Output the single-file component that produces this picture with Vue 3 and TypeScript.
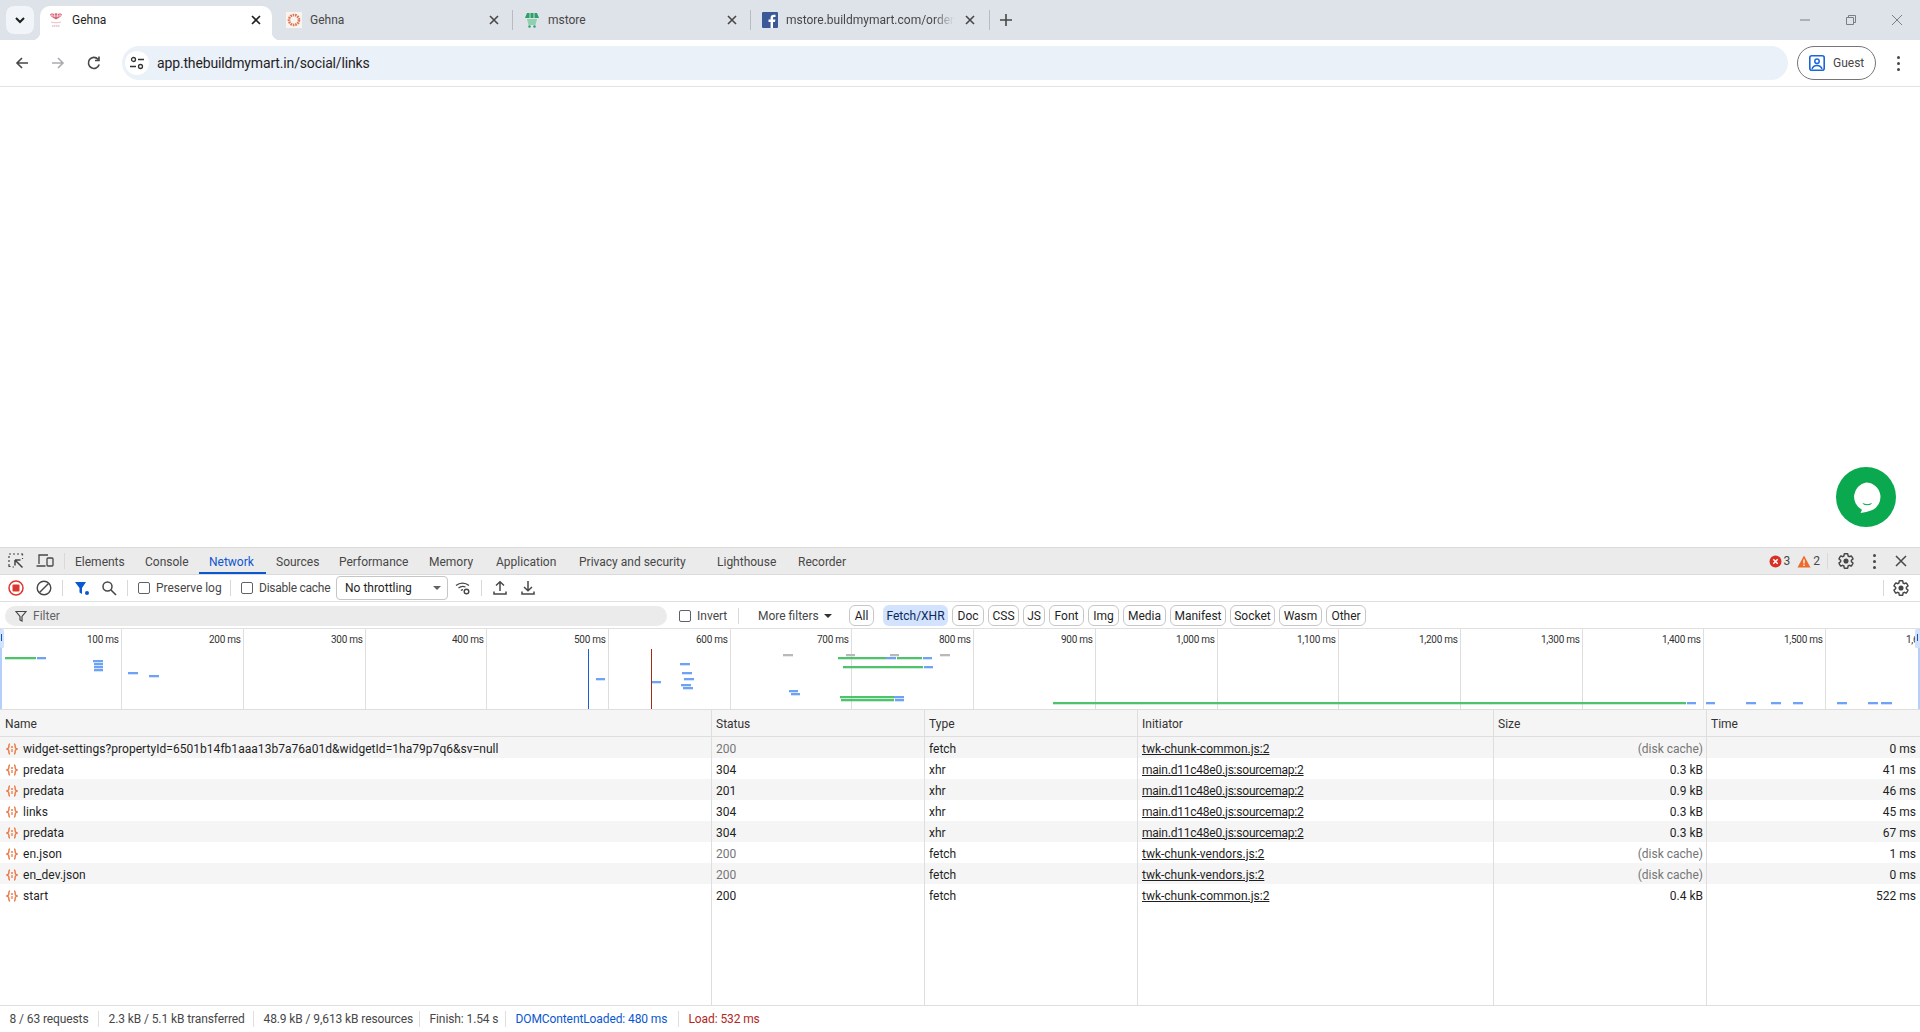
<script setup lang="ts">
// Chrome window with the DevTools network panel docked at the bottom.
const devTabs = [
  { label: 'Elements', w: 70 },
  { label: 'Console', w: 64 },
  { label: 'Network', w: 67 },
  { label: 'Sources', w: 63 },
  { label: 'Performance', w: 90 },
  { label: 'Memory', w: 67 },
  { label: 'Application', w: 83 },
  { label: 'Privacy and security', w: 138 },
  { label: 'Lighthouse', w: 81 },
  { label: 'Recorder', w: 70 },
]
const chips = [
  { label: 'All', w: 25 },
  { label: 'Fetch/XHR', w: 65 },
  { label: 'Doc', w: 32 },
  { label: 'CSS', w: 31 },
  { label: 'JS', w: 22 },
  { label: 'Font', w: 35 },
  { label: 'Img', w: 31 },
  { label: 'Media', w: 43 },
  { label: 'Manifest', w: 56 },
  { label: 'Socket', w: 45 },
  { label: 'Wasm', w: 43 },
  { label: 'Other', w: 40 },
]

const GREEN = '#4fc26c'
const BLUE = '#6ea2f5'
const GRAY = '#b9b9b9'
const ticks = Array.from({ length: 16 }, (_, i) => {
  const ms = (i + 1) * 100
  return { x: Math.floor(121.7 * (i + 1)) + 0.5, label: `${ms.toLocaleString('en-US')} ms` }
})

const bars: [number, number, number, string][] = [
  [5, 36, 658, GREEN], [37, 46, 658, BLUE],
  [93, 103, 661, BLUE], [94, 103, 664, BLUE], [94, 103, 667, BLUE], [94, 103, 670, BLUE],
  [128, 138, 673, BLUE], [149, 159, 676, BLUE], [596, 605, 679, BLUE], [652, 661, 682, BLUE],
  [680, 690, 664, BLUE], [682, 692, 673, BLUE], [684, 694, 679, BLUE], [681, 691, 685, BLUE], [683, 693, 688, BLUE],
  [783, 793, 655, GRAY], [846, 855, 655, GRAY], [890, 899, 655, GRAY], [940, 950, 655, GRAY],
  [838, 886, 658, GREEN], [886, 896, 658, BLUE], [897, 922, 658, GREEN], [923, 932, 658, BLUE],
  [843, 923, 667, GREEN], [924, 933, 667, BLUE],
  [789, 798, 691, BLUE], [791, 800, 694, BLUE],
  [840, 894, 697, GREEN], [894, 904, 697, BLUE], [841, 894, 700, GREEN], [895, 904, 700, BLUE],
  [1053, 1686, 703, GREEN], [1687, 1696, 703, BLUE], [1706, 1715, 703, BLUE], [1746, 1756, 703, BLUE],
  [1771, 1781, 703, BLUE], [1793, 1803, 703, BLUE], [1837, 1847, 703, BLUE], [1868, 1878, 703, BLUE], [1881, 1892, 703, BLUE],
]

const columns = ['Name', 'Status', 'Type', 'Initiator', 'Size', 'Time']
const common = 'twk-chunk-common.js:2'
const vendors = 'twk-chunk-vendors.js:2'
const mainMap = 'main.d11c48e0.js:sourcemap:2'
const rows = [
  { name: 'widget-settings?propertyId=6501b14fb1aaa13b7a76a01d&widgetId=1ha79p7q6&sv=null', status: '200', cached: true, type: 'fetch', init: common, size: '(disk cache)', time: '0 ms' },
  { name: 'predata', status: '304', cached: false, type: 'xhr', init: mainMap, size: '0.3 kB', time: '41 ms' },
  { name: 'predata', status: '201', cached: false, type: 'xhr', init: mainMap, size: '0.9 kB', time: '46 ms' },
  { name: 'links', status: '304', cached: false, type: 'xhr', init: mainMap, size: '0.3 kB', time: '45 ms' },
  { name: 'predata', status: '304', cached: false, type: 'xhr', init: mainMap, size: '0.3 kB', time: '67 ms' },
  { name: 'en.json', status: '200', cached: true, type: 'fetch', init: vendors, size: '(disk cache)', time: '1 ms' },
  { name: 'en_dev.json', status: '200', cached: true, type: 'fetch', init: vendors, size: '(disk cache)', time: '0 ms' },
  { name: 'start', status: '200', cached: false, type: 'fetch', init: common, size: '0.4 kB', time: '522 ms' },
]
const summary = [
  { text: '8 / 63 requests', cls: '', w: 99 },
  { text: '2.3 kB / 5.1 kB transferred', cls: '', w: 155 },
  { text: '48.9 kB / 9,613 kB resources', cls: '', w: 166 },
  { text: 'Finish: 1.54 s', cls: '', w: 86 },
  { text: 'DOMContentLoaded: 480 ms', cls: 'dcl', w: 173 },
  { text: 'Load: 532 ms', cls: 'load', w: 90 },
]
const gear = 'M19.14 12.94c.04-.3.06-.61.06-.94 0-.32-.02-.64-.07-.94l2.03-1.58c.18-.14.23-.41.12-.61l-1.92-3.32c-.12-.22-.37-.29-.59-.22l-2.39.96c-.5-.38-1.03-.7-1.62-.94l-.36-2.54c-.04-.24-.24-.41-.48-.41h-3.84c-.24 0-.43.17-.47.41l-.36 2.54c-.59.24-1.13.57-1.62.94l-2.39-.96c-.22-.08-.47 0-.59.22L2.74 8.87c-.12.21-.08.47.12.61l2.03 1.58c-.05.3-.09.63-.09.94s.02.64.07.94l-2.03 1.58c-.18.14-.23.41-.12.61l1.92 3.32c.12.22.37.29.59.22l2.39-.96c.5.38 1.03.7 1.62.94l.36 2.54c.05.24.24.41.48.41h3.84c.24 0 .44-.17.47-.41l.36-2.54c.59-.24 1.13-.56 1.62-.94l2.39.96c.22.08.47 0 .59-.22l1.92-3.32c.12-.22.07-.47-.12-.61l-2.01-1.58z'
</script>

<template>
  <div class="win">
    <div class="strip">
      <div class="tab-search">
        <svg width="12" height="12" viewBox="0 0 12 12"><path d="M2 4l4 4 4-4" fill="none" stroke="#1f1f1f" stroke-width="2" /></svg>
      </div>
      <div class="tab active">
        <svg class="fav" viewBox="0 0 16 16">
          <path d="M2 2.500l2-1.500 2 1 2-1 2 1 2-1 2 1.500-1 2-5 3-5-3z" fill="#d9697a" />
          <path d="M4 1v3M6.500 1v4M9.500 1v4M12 1v3M2.500 4h11" stroke="#fff" stroke-width=".6" />
          <path d="M3 10c3 1 7 1 10 0" fill="none" stroke="#e6b4bb" stroke-width=".9" />
          <path d="M4 14h8" stroke="#e3bcc1" stroke-width="1.500" stroke-dasharray="1.500 .5" />
        </svg>
        <span class="title">Gehna</span>
        <svg class="close" viewBox="0 0 16 16"><path d="M4 4l8 8M12 4l-8 8" stroke="#1f1f1f" stroke-width="1.600" /></svg>
      </div>
      <div class="tab sep">
        <svg class="fav" viewBox="0 0 16 16">
          <rect width="16" height="16" fill="#fbf3ee" />
          <circle cx="8" cy="8" r="5" fill="none" stroke="#d9785a" stroke-width="2.600" stroke-dasharray="1.600 .8" />
        </svg>
        <span class="title">Gehna</span>
        <svg class="close" viewBox="0 0 16 16"><path d="M4 4l8 8M12 4l-8 8" stroke="#474747" stroke-width="1.600" /></svg>
      </div>
      <div class="tab sep">
        <svg class="fav" viewBox="0 0 16 16">
          <path d="M3 1h10l2 5H1z" fill="#2f9e6b" />
          <path d="M6 1v5M10 1v5" stroke="#bfe6d2" />
          <path d="M3 7h10l-1.500 6h-7z" fill="#8fd0b0" />
          <circle cx="5.500" cy="14.500" r="1.200" fill="#2f9e6b" /><circle cx="10.500" cy="14.500" r="1.200" fill="#2f9e6b" />
        </svg>
        <span class="title">mstore</span>
        <svg class="close" viewBox="0 0 16 16"><path d="M4 4l8 8M12 4l-8 8" stroke="#474747" stroke-width="1.600" /></svg>
      </div>
      <div class="tab sep">
        <svg class="fav" viewBox="0 0 16 16">
          <rect width="16" height="16" rx="1" fill="#3b5998" />
          <path d="M11 16v-6h2l.4-2.400H11V6.200c0-.8.3-1.200 1.200-1.200h1.300V2.800c-.4 0-1-.1-1.800-.1-1.900 0-3.100 1.100-3.100 3.200v1.700H6.500V10h2.100v6z" fill="#fff" />
        </svg>
        <span class="title fade">mstore.buildmymart.com/orders</span>
        <svg class="close" viewBox="0 0 16 16"><path d="M4 4l8 8M12 4l-8 8" stroke="#474747" stroke-width="1.600" /></svg>
      </div>
      <svg class="plus" width="16" height="16" viewBox="0 0 16 16"><path d="M8 2v12M2 8h12" stroke="#474747" stroke-width="1.600" /></svg>
      <div class="winctl">
        <span><svg width="12" height="12" viewBox="0 0 12 12"><path d="M1 6h10" stroke="#7b7f85" /></svg></span>
        <span><svg width="12" height="12" viewBox="0 0 12 12"><path d="M1.500 3.500h7v7h-7zM3.500 3.500v-2h7v7h-2" fill="none" stroke="#7b7f85" /></svg></span>
        <span><svg width="12" height="12" viewBox="0 0 12 12"><path d="M1 1l10 10M11 1L1 11" stroke="#7b7f85" /></svg></span>
      </div>
    </div>

    <div class="toolbar">
      <div class="nav">
        <svg width="16" height="16" viewBox="0 0 16 16"><path d="M14 8H3M8 3L3 8l5 5" fill="none" stroke="#474747" stroke-width="1.600" /></svg>
      </div>
      <div class="nav">
        <svg width="16" height="16" viewBox="0 0 16 16"><path d="M2 8h11M8 3l5 5-5 5" fill="none" stroke="#a9acb0" stroke-width="1.600" /></svg>
      </div>
      <div class="nav">
        <svg width="16" height="16" viewBox="0 0 16 16"><path d="M13.200 9.500A5.500 5.500 0 1 1 12 4.200M13 1.500v4h-4" fill="none" stroke="#474747" stroke-width="1.600" /></svg>
      </div>
      <div class="omni">
        <div class="siteinfo">
          <svg width="16" height="16" viewBox="0 0 16 16">
            <circle cx="4.500" cy="4.500" r="2" fill="none" stroke="#333" stroke-width="1.300" />
            <path d="M9 4.500h6M1 11.500h6" stroke="#333" stroke-width="1.300" />
            <circle cx="11.500" cy="11.500" r="2" fill="none" stroke="#333" stroke-width="1.300" />
          </svg>
        </div>
        <span class="url">app.thebuildmymart.in/social/links</span>
      </div>
      <div class="guest">
        <svg width="16" height="16" viewBox="0 0 16 16">
          <rect x=".8" y=".8" width="14.400" height="14.400" rx="2" fill="none" stroke="#1a66d9" stroke-width="1.600" />
          <circle cx="8" cy="6.300" r="2.200" fill="none" stroke="#1a66d9" stroke-width="1.500" />
          <path d="M3 14c.8-2.600 2.600-3.600 5-3.600s4.200 1 5 3.600" fill="none" stroke="#1a66d9" stroke-width="1.500" />
        </svg>
        <span>Guest</span>
      </div>
      <div class="kebab"><i /><i /><i /></div>
    </div>

    <main class="page">
      <div class="chat">
        <svg width="60" height="60" viewBox="0 0 60 60">
          <circle cx="30" cy="30" r="30" fill="#0aa84f" />
          <path d="M30 15.500a14.500 14.500 0 0 1 5 28.100c-3 1.200-6.500 1.800-10.500 2.400l1.500-3.300a14.500 14.500 0 0 1 4-27.200z" fill="#fff" />
          <path d="M26.500 36c3 1.500 6.500 1.500 9.500 0-1 3-8.500 3-9.500 0z" fill="#0aa84f" />
        </svg>
      </div>
    </main>

    <section class="devtools">
      <div class="dt-tabs">
        <svg class="dt-ic first" width="16" height="16" viewBox="0 0 16 16">
          <path d="M1 1h2M5 1h2M9 1h2M13 1h1.500v1.500M1 3v2M1 7v2M1 11v2.500h1.500M14.500 5v1M4.500 14H6" fill="none" stroke="#474747" stroke-width="1.200" />
          <path d="M7 7h5.500M7 7v5.500M7 7l7.500 7.500" fill="none" stroke="#474747" stroke-width="1.500" />
        </svg>
        <svg class="dt-ic" width="18" height="16" viewBox="0 0 18 16">
          <path d="M3 11V2h9M.5 13h9" fill="none" stroke="#474747" stroke-width="1.300" />
          <rect x="11" y="5" width="6" height="8" rx="1" fill="none" stroke="#474747" stroke-width="1.300" />
        </svg>
        <i class="vsep tabs-sep" />
        <span
          v-for="t in devTabs"
          :key="t.label"
          class="dt-tab"
          :class="{ on: t.label === 'Network' }"
          :style="{ width: `${t.w}px` }"
        >{{ t.label }}</span>
        <div class="dt-right">
          <svg width="13" height="13" viewBox="0 0 13 13">
            <circle cx="6.500" cy="6.500" r="6" fill="#d93025" />
            <path d="M4.300 4.300l4.400 4.400M8.700 4.300l-4.400 4.400" stroke="#fff" stroke-width="1.500" />
          </svg>
          <span class="count">3</span>
          <svg class="warn" width="14" height="13" viewBox="0 0 14 13">
            <path d="M7 .5l6.500 12H.5z" fill="#ec6a2c" />
            <path d="M7 4.500v4M7 9.500v1.500" stroke="#fff" stroke-width="1.300" />
          </svg>
          <span class="count">2</span>
          <i class="vsep count-sep" />
          <svg class="gear-top" width="18" height="18" viewBox="0 0 24 24"><path :d="gear" fill="none" stroke="#474747" stroke-width="1.900" /><circle cx="12" cy="12" r="3.400" fill="#474747" /></svg>
          <div class="dt-kebab"><i /><i /><i /></div>
          <svg class="dt-x" width="14" height="14" viewBox="0 0 14 14"><path d="M2 2l10 10M12 2L2 12" stroke="#474747" stroke-width="1.500" /></svg>
        </div>
      </div>

      <div class="net-bar">
        <span class="ib">
          <svg width="16" height="16" viewBox="0 0 16 16"><circle cx="8" cy="8" r="7" fill="none" stroke="#dc362e" stroke-width="1.500" /><rect x="4.500" y="4.500" width="7" height="7" rx="1" fill="#dc362e" /></svg>
        </span>
        <span class="ib">
          <svg width="16" height="16" viewBox="0 0 16 16"><circle cx="8" cy="8" r="6.800" fill="none" stroke="#474747" stroke-width="1.400" /><path d="M3.500 12.500l9-9" stroke="#474747" stroke-width="1.400" /></svg>
        </span>
        <i class="vsep s1" />
        <span class="ib narrow">
          <svg width="16" height="16" viewBox="0 0 16 16"><path d="M1 2h11L8 8v6l-2.500-1.500V8z" fill="#0b57d0" /><circle cx="13" cy="13" r="2" fill="#0b57d0" /></svg>
        </span>
        <span class="ib narrow">
          <svg width="16" height="16" viewBox="0 0 16 16"><circle cx="6.500" cy="6.500" r="4.500" fill="none" stroke="#474747" stroke-width="1.500" /><path d="M10 10l5 5" stroke="#474747" stroke-width="1.600" /></svg>
        </span>
        <i class="vsep s2" />
        <span class="check c1" /><span class="cl preserve">Preserve log</span>
        <i class="vsep s3" />
        <span class="check c2" /><span class="cl disable">Disable cache</span>
        <div class="select"><span>No throttling</span><i class="tri" /></div>
        <span class="ib wifi">
          <svg width="16" height="16" viewBox="0 0 16 16">
            <path d="M1 5.500a10 10 0 0 1 13 0M3.500 8a6.500 6.500 0 0 1 7-1M6 10.500a3 3 0 0 1 2-.8" fill="none" stroke="#474747" stroke-width="1.300" />
            <circle cx="11.500" cy="11.500" r="2.300" fill="none" stroke="#474747" stroke-width="1.400" />
          </svg>
        </span>
        <i class="vsep s4" />
        <span class="ib up">
          <svg width="16" height="16" viewBox="0 0 16 16"><path d="M8 11V2M4 5.500L8 1.800l4 3.700M2 11.500v2.500h12v-2.500" fill="none" stroke="#474747" stroke-width="1.500" /></svg>
        </span>
        <span class="ib">
          <svg width="16" height="16" viewBox="0 0 16 16"><path d="M8 1v9.500M4 7l4 3.700L12 7M2 11.500v2.500h12v-2.500" fill="none" stroke="#474747" stroke-width="1.500" /></svg>
        </span>
        <div class="net-right">
          <i class="vsep" />
          <span class="ib">
            <svg width="18" height="18" viewBox="0 0 24 24"><path :d="gear" fill="none" stroke="#474747" stroke-width="1.900" /><circle cx="12" cy="12" r="3.400" fill="#474747" /></svg>
          </span>
        </div>
      </div>

      <div class="filter-bar">
        <div class="filter-input">
          <svg width="12" height="12" viewBox="0 0 12 12"><path d="M1 1.500h10L7 6.500V11l-2-1V6.500z" fill="none" stroke="#474747" stroke-width="1.200" /></svg>
          <span>Filter</span>
        </div>
        <span class="check c3" /><span class="cl invert">Invert</span>
        <i class="vsep s5" />
        <span class="cl more">More filters</span><i class="tri dark" />
        <div class="chips">
          <span
            v-for="c in chips"
            :key="c.label"
            class="chip"
            :class="{ sel: c.label === 'Fetch/XHR', gapped: c.label === 'All' }"
            :style="{ width: `${c.w}px` }"
          >{{ c.label }}</span>
        </div>
      </div>

      <div class="overview">
        <svg width="1920" height="80" viewBox="0 629 1920 80">
          <g v-for="t in ticks" :key="t.label">
            <line :x1="t.x" y1="629" :x2="t.x" y2="709" stroke="#dedede" />
            <text :x="t.x - 3" y="643" text-anchor="end" class="tick">{{ t.label }}</text>
          </g>
          <g v-for="(b, i) in bars" :key="i" :fill="b[3]">
            <rect :x="b[0]" :y="b[2] - 1" :width="b[1] - b[0]" height="2" />
            <rect :x="b[0]" :y="b[2] + 1" :width="b[1] - b[0]" height="1" opacity=".3" />
          </g>
          <rect x="588" y="649" width="1" height="60" fill="#1a5fd0" />
          <rect x="651" y="649" width="1" height="60" fill="#a52a1a" />
          <rect x="0" y="629" width="2" height="80" fill="#b5cffb" />
          <rect x="0" y="629" width="4" height="19" rx="1.500" fill="#d3e3fd" />
          <rect x="1" y="634" width="1" height="7" fill="#0b57d0" />
          <rect x="1918" y="629" width="2" height="80" fill="#b5cffb" />
          <rect x="1915" y="629" width="5" height="19" rx="1.500" fill="#d3e3fd" />
          <rect x="1917" y="634" width="1" height="7" fill="#0b57d0" />
        </svg>
      </div>

      <div class="table">
        <div class="row head">
          <span v-for="c in columns" :key="c">{{ c }}</span>
        </div>
        <div v-for="(r, i) in rows" :key="i" class="row" :class="{ odd: i % 2 === 0 }">
          <span class="name">
            <svg width="12" height="12" viewBox="0 0 12 12">
              <path d="M4 1C2.500 1 3 3 2.800 4.200 2.600 5.300 1.800 5.700 1 6c.8.300 1.600.7 1.800 1.800C3 9 2.500 11 4 11M8 1c1.500 0 1 2 1.200 3.200.2 1.100 1 1.500 1.800 1.800-.8.300-1.600.7-1.800 1.800C9 9 9.500 11 8 11" fill="none" stroke="#ea7d4b" stroke-width="1.500" />
              <circle cx="6" cy="4" r="1" fill="#ea7d4b" />
              <path d="M6 6v3" stroke="#ea7d4b" stroke-width="1.300" />
            </svg>
            {{ r.name }}
          </span>
          <span :class="{ dim: r.cached }">{{ r.status }}</span>
          <span>{{ r.type }}</span>
          <span class="link" :class="{ tight: r.init === mainMap }">{{ r.init }}</span>
          <span class="num" :class="{ dim: r.cached }">{{ r.size }}</span>
          <span class="num">{{ r.time }}</span>
        </div>
        <div class="col-lines"><i v-for="c in columns" :key="c" /></div>
      </div>

      <div class="status">
        <span v-for="s in summary" :key="s.text" :class="s.cls" :style="{ width: `${s.w}px` }">{{ s.text }}</span>
      </div>
    </section>
  </div>
</template>

<style scoped>
.win {
  width: 1920px;
  height: 1032px;
  display: flex;
  flex-direction: column;
  overflow: hidden;
  background: #fff;
  font-family: Roboto, "Liberation Sans", sans-serif;
  color: #1f1f1f;
}
svg {
  display: block;
  flex: none;
}

/* tab strip */
.strip {
  height: 40px;
  flex: none;
  display: flex;
  align-items: flex-end;
  padding-left: 6px;
  background: #dee3e9;
}
.tab-search {
  width: 28px;
  height: 28px;
  margin: 0 6px 6px 0;
  border-radius: 8px;
  background: #f1f4f8;
  display: flex;
  align-items: center;
  justify-content: center;
}
.tab {
  position: relative;
  width: 232px;
  height: 34px;
  margin-right: 6px;
  padding: 0 8px 6px;
  box-sizing: border-box;
  display: flex;
  align-items: center;
  gap: 8px;
  border-radius: 10px 10px 0 0;
  font-size: 12px;
  color: #474747;
}
.tab.active {
  background: #fff;
  color: #1f1f1f;
}
.tab.active::before,
.tab.active::after {
  content: "";
  position: absolute;
  bottom: 0;
  width: 8px;
  height: 8px;
}
.tab.active::before {
  left: -8px;
  background: radial-gradient(circle at 0 0, transparent 8px, #fff 8.500px);
}
.tab.active::after {
  right: -8px;
  background: radial-gradient(circle at 100% 0, transparent 8px, #fff 8.500px);
}
.tab.sep:nth-child(n + 4)::before {
  content: "";
  position: absolute;
  left: -4px;
  top: 4px;
  height: 20px;
  width: 1px;
  background: #b8bcc2;
}
.tab.sep:nth-child(5)::after {
  content: "";
  position: absolute;
  right: -4px;
  top: 4px;
  height: 20px;
  width: 1px;
  background: #b8bcc2;
}
.fav {
  width: 16px;
  height: 16px;
}
.title {
  flex: 1;
  min-width: 0;
  white-space: nowrap;
  overflow: hidden;
}
.title.fade {
  mask-image: linear-gradient(to right, #000 88%, transparent 100%);
}
.close {
  width: 16px;
  height: 16px;
}
.plus {
  margin: 0 0 12px 6px;
}
.winctl {
  margin-left: auto;
  align-self: flex-start;
  display: flex;
}
.winctl span {
  width: 46px;
  height: 40px;
  display: flex;
  align-items: center;
  justify-content: center;
}

/* address bar */
.toolbar {
  height: 46px;
  flex: none;
  display: flex;
  align-items: center;
  padding: 0 4px;
  border-radius: 8px 8px 0 0;
  border-bottom: 1px solid #e3e3e3;
  background: #fff;
}
.nav {
  width: 36px;
  height: 34px;
  display: flex;
  align-items: center;
  justify-content: center;
}
.omni {
  flex: 1;
  height: 34px;
  margin-left: 10px;
  padding-left: 3px;
  display: flex;
  align-items: center;
  border-radius: 17px;
  background: #ebf1f9;
}
.siteinfo {
  width: 24px;
  height: 24px;
  border-radius: 50%;
  background: #fff;
  display: flex;
  align-items: center;
  justify-content: center;
}
.url {
  margin-left: 8px;
  font-size: 14px;
  letter-spacing: -0.15px;
  color: #1f1f1f;
}
.guest {
  width: 79px;
  height: 34px;
  margin-left: 9px;
  box-sizing: border-box;
  padding-left: 11px;
  display: flex;
  align-items: center;
  gap: 8px;
  border: 1px solid #747775;
  border-radius: 17px;
  font-size: 12px;
  color: #474747;
}
.kebab {
  width: 36px;
  margin-left: 4px;
  display: flex;
  flex-direction: column;
  align-items: center;
  gap: 3px;
}
.kebab i,
.dt-kebab i {
  width: 3px;
  height: 3px;
  border-radius: 50%;
  background: #474747;
}

.page {
  flex: 1;
  position: relative;
}
.chat {
  position: absolute;
  left: 1836px;
  top: 380px;
}

/* devtools */
.devtools {
  flex: none;
  height: 485px;
  display: flex;
  flex-direction: column;
  font-size: 12px;
  border-top: 1px solid #dadada;
  box-sizing: border-box;
}
.vsep {
  flex: none;
  display: block;
  width: 1px;
  height: 16px;
  background: #d9d9d9;
}
.dt-tabs {
  height: 27px;
  flex: none;
  box-sizing: border-box;
  display: flex;
  align-items: center;
  background: #ebebeb;
  border-bottom: 1px solid #dadada;
  color: #474747;
}
.dt-ic.first {
  margin-left: 8px;
}
.dt-ic + .dt-ic {
  margin-left: 12px;
}
.tabs-sep {
  margin-left: 10px;
  margin-right: -0.500px;
}
.dt-tab {
  flex: none;
  height: 26px;
  line-height: 29px;
  padding-left: 10.500px;
  box-sizing: border-box;
  white-space: nowrap;
}
.dt-tab.on {
  color: #0b57d0;
  border-bottom: 2px solid #0b57d0;
}
.dt-right {
  margin-left: auto;
  display: flex;
  align-items: center;
}
.count {
  margin-left: 2px;
}
.warn {
  margin-left: 7px;
}
.count-sep {
  margin: 0 9px 0 7px;
}
.gear-top {
  margin-right: 5px;
}
.dt-kebab {
  width: 28px;
  display: flex;
  flex-direction: column;
  align-items: center;
  gap: 3px;
}
.dt-x {
  margin: 0 12px 0 6px;
}
.net-bar,
.filter-bar {
  height: 27px;
  flex: none;
  box-sizing: border-box;
  display: flex;
  align-items: center;
  border-bottom: 1px solid #e0e0e0;
  color: #474747;
}
.net-bar {
  padding-left: 2px;
}
.ib {
  width: 28px;
  flex: none;
  display: flex;
  justify-content: center;
}
.ib.narrow {
  width: 27px;
}
.s1 {
  margin: 0 5px 0 4px;
}
.s2 {
  margin: 0 0 0 5px;
}
.check {
  flex: none;
  width: 12px;
  height: 12px;
  box-sizing: border-box;
  border: 1px solid #5f6368;
  border-radius: 2px;
  background: #fff;
}
.c1,
.c2 {
  margin-left: 10px;
}
.cl {
  margin-left: 6px;
  white-space: nowrap;
}
.preserve {
  width: 65px;
  letter-spacing: -0.05px;
}
.disable {
  width: 72px;
  letter-spacing: -0.25px;
}
.s3 {
  margin-left: 9px;
}
.select {
  width: 112px;
  height: 24px;
  margin-left: 5px;
  box-sizing: border-box;
  padding: 0 6px 0 8px;
  display: flex;
  align-items: center;
  justify-content: space-between;
  border: 1px solid #c4c7c5;
  border-radius: 4px;
  color: #1f1f1f;
}
.tri {
  display: block;
  width: 0;
  height: 0;
  border-left: 4px solid transparent;
  border-right: 4px solid transparent;
  border-top: 4px solid #5f6368;
}
.tri.dark {
  margin-left: 6px;
  border-top-color: #333;
}
.wifi {
  margin-left: 1px;
}
.s4 {
  margin-left: 4px;
}
.up {
  margin-left: 4px;
}
.net-right {
  margin-left: auto;
  padding-right: 5px;
  display: flex;
  align-items: center;
  gap: 3px;
}
.filter-bar {
  padding: 1px 0 0 5px;
}
.filter-input {
  width: 662px;
  height: 20px;
  box-sizing: border-box;
  padding-left: 10px;
  display: flex;
  align-items: center;
  gap: 6px;
  border-radius: 10px;
  background: #ebebeb;
  color: #5f6368;
}
.c3 {
  margin-left: 12px;
}
.invert {
  width: 30px;
}
.s5 {
  margin-left: 11px;
}
.more {
  margin-left: 19px;
  width: 60px;
}
.chips {
  margin-left: 17px;
  display: flex;
  align-items: center;
  gap: 4px;
}
.chip {
  flex: none;
  height: 21px;
  line-height: 21px;
  text-align: center;
  box-sizing: border-box;
  border: 1px solid #c7c7c7;
  border-radius: 6px;
  color: #1f1f1f;
  white-space: nowrap;
}
.chip.gapped {
  margin-right: 5px;
}
.chip.sel {
  border-color: transparent;
  background: #d3e3fd;
  color: #0a2a5c;
}
.overview {
  height: 80px;
  flex: none;
  overflow: hidden;
}
.tick {
  font-size: 10px;
  letter-spacing: -0.3px;
  fill: #333;
}

/* request table */
.table {
  flex: 1;
  min-height: 0;
  position: relative;
  border-top: 1px solid #dedede;
}
.row {
  display: grid;
  grid-template-columns: 712px 213px 213px 356px 213px 1fr;
  height: 21px;
  align-items: center;
  white-space: nowrap;
}
.row > span {
  padding: 2px 4px 0;
}
.row.odd {
  background: #f5f5f5;
}
.row.head {
  height: 27px;
  box-sizing: border-box;
  background: #f5f5f5;
  border-bottom: 1px solid #dedede;
  color: #333;
}
.row.head > span {
  padding-top: 1px;
}
.row.head > span:first-child {
  padding-left: 5px;
}
.row .name {
  display: flex;
  align-items: center;
  gap: 5px;
  padding-left: 6px;
  letter-spacing: 0.04px;
}
.dim {
  color: #757575;
}
.link {
  text-decoration: underline;
  color: #1f1f1f;
}
.link.tight {
  letter-spacing: -0.22px;
}
.num {
  text-align: right;
}
.col-lines {
  position: absolute;
  inset: 0;
  display: grid;
  grid-template-columns: 712px 213px 213px 356px 213px 1fr;
  pointer-events: none;
}
.col-lines i {
  border-right: 1px solid #dedede;
}
.col-lines i:last-child {
  border: 0;
}
.status {
  height: 27px;
  flex: none;
  box-sizing: border-box;
  display: flex;
  align-items: center;
  border-top: 1px solid #dedede;
  color: #474747;
  white-space: nowrap;
}
.status span {
  flex: none;
  box-sizing: border-box;
  padding-left: 9.500px;
  letter-spacing: -0.1px;
  border-right: 1px solid #dedede;
  line-height: 16px;
}
.status span:last-child {
  border: 0;
}
.dcl {
  color: #0b57d0;
}
.load {
  color: #b3261e;
}
</style>
